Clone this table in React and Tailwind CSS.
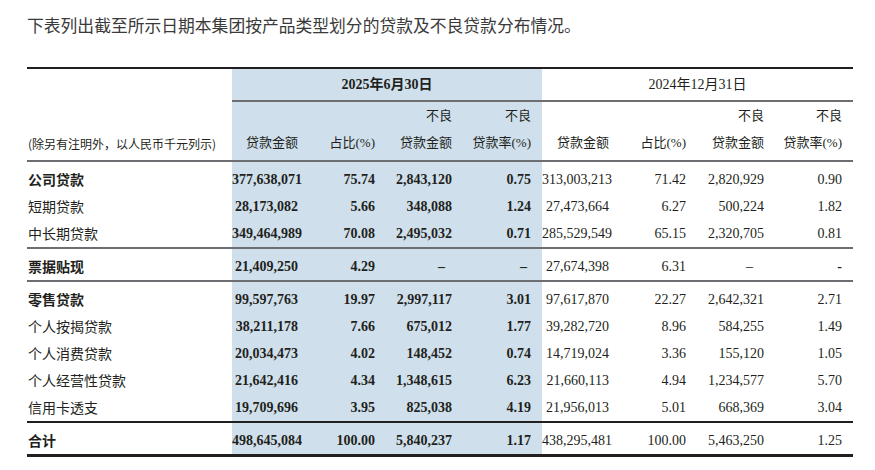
import React from "react";

const NUM = "font-['Liberation_Sans_Narrow','Liberation_Serif','Noto_Sans_CJK_SC',serif]";
const CJK = "font-['Noto_Sans_CJK_SC','Liberation_Sans',sans-serif]";

const GROUPS = [
  [
    { label: "公司贷款", bold: true, a: ["377,638,071", "75.74", "2,843,120", "0.75"], b: ["313,003,213", "71.42", "2,820,929", "0.90"] },
    { label: "短期贷款", a: ["28,173,082", "5.66", "348,088", "1.24"], b: ["27,473,664", "6.27", "500,224", "1.82"] },
    { label: "中长期贷款", a: ["349,464,989", "70.08", "2,495,032", "0.71"], b: ["285,529,549", "65.15", "2,320,705", "0.81"] },
  ],
  [
    { label: "票据贴现", bold: true, a: ["21,409,250", "4.29", "–", "–"], b: ["27,674,398", "6.31", "–", "-"] },
  ],
  [
    { label: "零售贷款", bold: true, a: ["99,597,763", "19.97", "2,997,117", "3.01"], b: ["97,617,870", "22.27", "2,642,321", "2.71"] },
    { label: "个人按揭贷款", a: ["38,211,178", "7.66", "675,012", "1.77"], b: ["39,282,720", "8.96", "584,255", "1.49"] },
    { label: "个人消费贷款", a: ["20,034,473", "4.02", "148,452", "0.74"], b: ["14,719,024", "3.36", "155,120", "1.05"] },
    { label: "个人经营性贷款", a: ["21,642,416", "4.34", "1,348,615", "6.23"], b: ["21,660,113", "4.94", "1,234,577", "5.70"] },
    { label: "信用卡透支", a: ["19,709,696", "3.95", "825,038", "4.19"], b: ["21,956,013", "5.01", "668,369", "3.04"] },
  ],
  [
    { label: "合计", bold: true, a: ["498,645,084", "100.00", "5,840,237", "1.17"], b: ["438,295,481", "100.00", "5,463,250", "1.25"] },
  ],
];

// extra right padding for the dash cells, per column
const DASH_PAD = ["", "", "pr-[18px]", "pr-[15px]", "", "", "pr-[22px]", "pr-[11px] font-bold"];

function Cell({ value, idx, blue, first, last, groupTop }) {
  const isDash = value === "–" || value === "-";
  return (
    <td
      className={[
        "text-right align-top text-[14px] text-[#231f20] pr-[11px]",
        NUM,
        blue ? "bg-[#cfe0ec] font-bold" : "",
        first ? "pt-[4px] h-[31px]" : "h-[27px]",
        groupTop ? "border-t-2 border-[#6d6e71]" : "",
        last ? "border-b-[3px] border-[#231f20]" : "",
        isDash ? DASH_PAD[idx] : "",
      ].join(" ")}
    >
      <div className="leading-[27px]">{value}</div>
    </td>
  );
}

export default function App() {
  return (
    <div className="w-[875px] h-[470px] bg-white overflow-hidden">
      <p className={`pl-[27px] pt-[13px] text-[16.8px] leading-[24px] text-[#3a3a3a] ${CJK}`}>
        下表列出截至所示日期本集团按产品类型划分的贷款及不良贷款分布情况。
      </p>

      <table className="ml-[27px] mt-[30px] w-[826px] table-fixed border-collapse">
        <colgroup>
          <col className="w-[205px]" />
          <col className="w-[77px]" />
          <col className="w-[77px]" />
          <col className="w-[77px]" />
          <col className="w-[79px]" />
          <col className="w-[78px]" />
          <col className="w-[77px]" />
          <col className="w-[78px]" />
          <col className="w-[78px]" />
        </colgroup>
        <thead>
          <tr className="h-[33px]">
            <th
              rowSpan={2}
              className={`border-t-2 border-b-2 border-t-[#231f20] border-b-[#6d6e71] align-bottom pb-[6px] text-left pl-px font-normal text-[12px] leading-[20px] text-[#231f20] ${CJK}`}
            >
              (除另有注明外，以人民币千元列示)
            </th>
            <th
              colSpan={4}
              className={`border-t-2 border-b-2 border-t-[#231f20] border-b-[#6d6e71] bg-[#cfe0ec] text-center font-bold text-[14px] text-[#231f20] ${NUM}`}
            >
              2025年6月30日
            </th>
            <th
              colSpan={4}
              className={`border-t-2 border-b-2 border-t-[#231f20] border-b-[#6d6e71] text-center font-normal text-[14px] text-[#231f20] ${NUM}`}
            >
              2024年12月31日
            </th>
          </tr>
          <tr className="h-[57px]">
            {["贷款金额", "占比(%)", "贷款金额", "贷款率(%)", "贷款金额", "占比(%)", "贷款金额", "贷款率(%)"].map((t, i) => (
              <th
                key={i}
                className={[
                  "border-b-2 border-[#6d6e71] align-bottom pb-[4px] pr-[11px] text-right font-normal text-[13px] leading-[27px] text-[#231f20]",
                  NUM,
                  i < 4 ? "bg-[#cfe0ec]" : "",
                ].join(" ")}
              >
                {(i === 2 || i === 3 || i === 6 || i === 7) && <div>不良</div>}
                <div>{t}</div>
              </th>
            ))}
          </tr>
        </thead>
        {GROUPS.map((g, gi) => (
          <tbody key={gi}>
            {g.map((r, ri) => {
              const first = ri === 0;
              const last = gi === GROUPS.length - 1;
              const groupTop = first && gi > 0;
              return (
                <tr key={r.label}>
                  <td
                    className={[
                      "align-top text-[14px] text-[#231f20] pl-px",
                      CJK,
                      r.bold ? "font-bold" : "font-normal",
                      first ? "pt-[4px] h-[31px]" : "h-[27px]",
                      groupTop ? "border-t-2 border-[#6d6e71]" : "",
                      last ? "border-b-[3px] border-[#231f20]" : "",
                    ].join(" ")}
                  >
                    <div className="leading-[27px]">{r.label}</div>
                  </td>
                  {r.a.map((v, i) => (
                    <Cell key={"a" + i} value={v} idx={i} blue first={first} last={last} groupTop={groupTop} />
                  ))}
                  {r.b.map((v, i) => (
                    <Cell key={"b" + i} value={v} idx={i + 4} first={first} last={last} groupTop={groupTop} />
                  ))}
                </tr>
              );
            })}
          </tbody>
        ))}
      </table>
    </div>
  );
}
